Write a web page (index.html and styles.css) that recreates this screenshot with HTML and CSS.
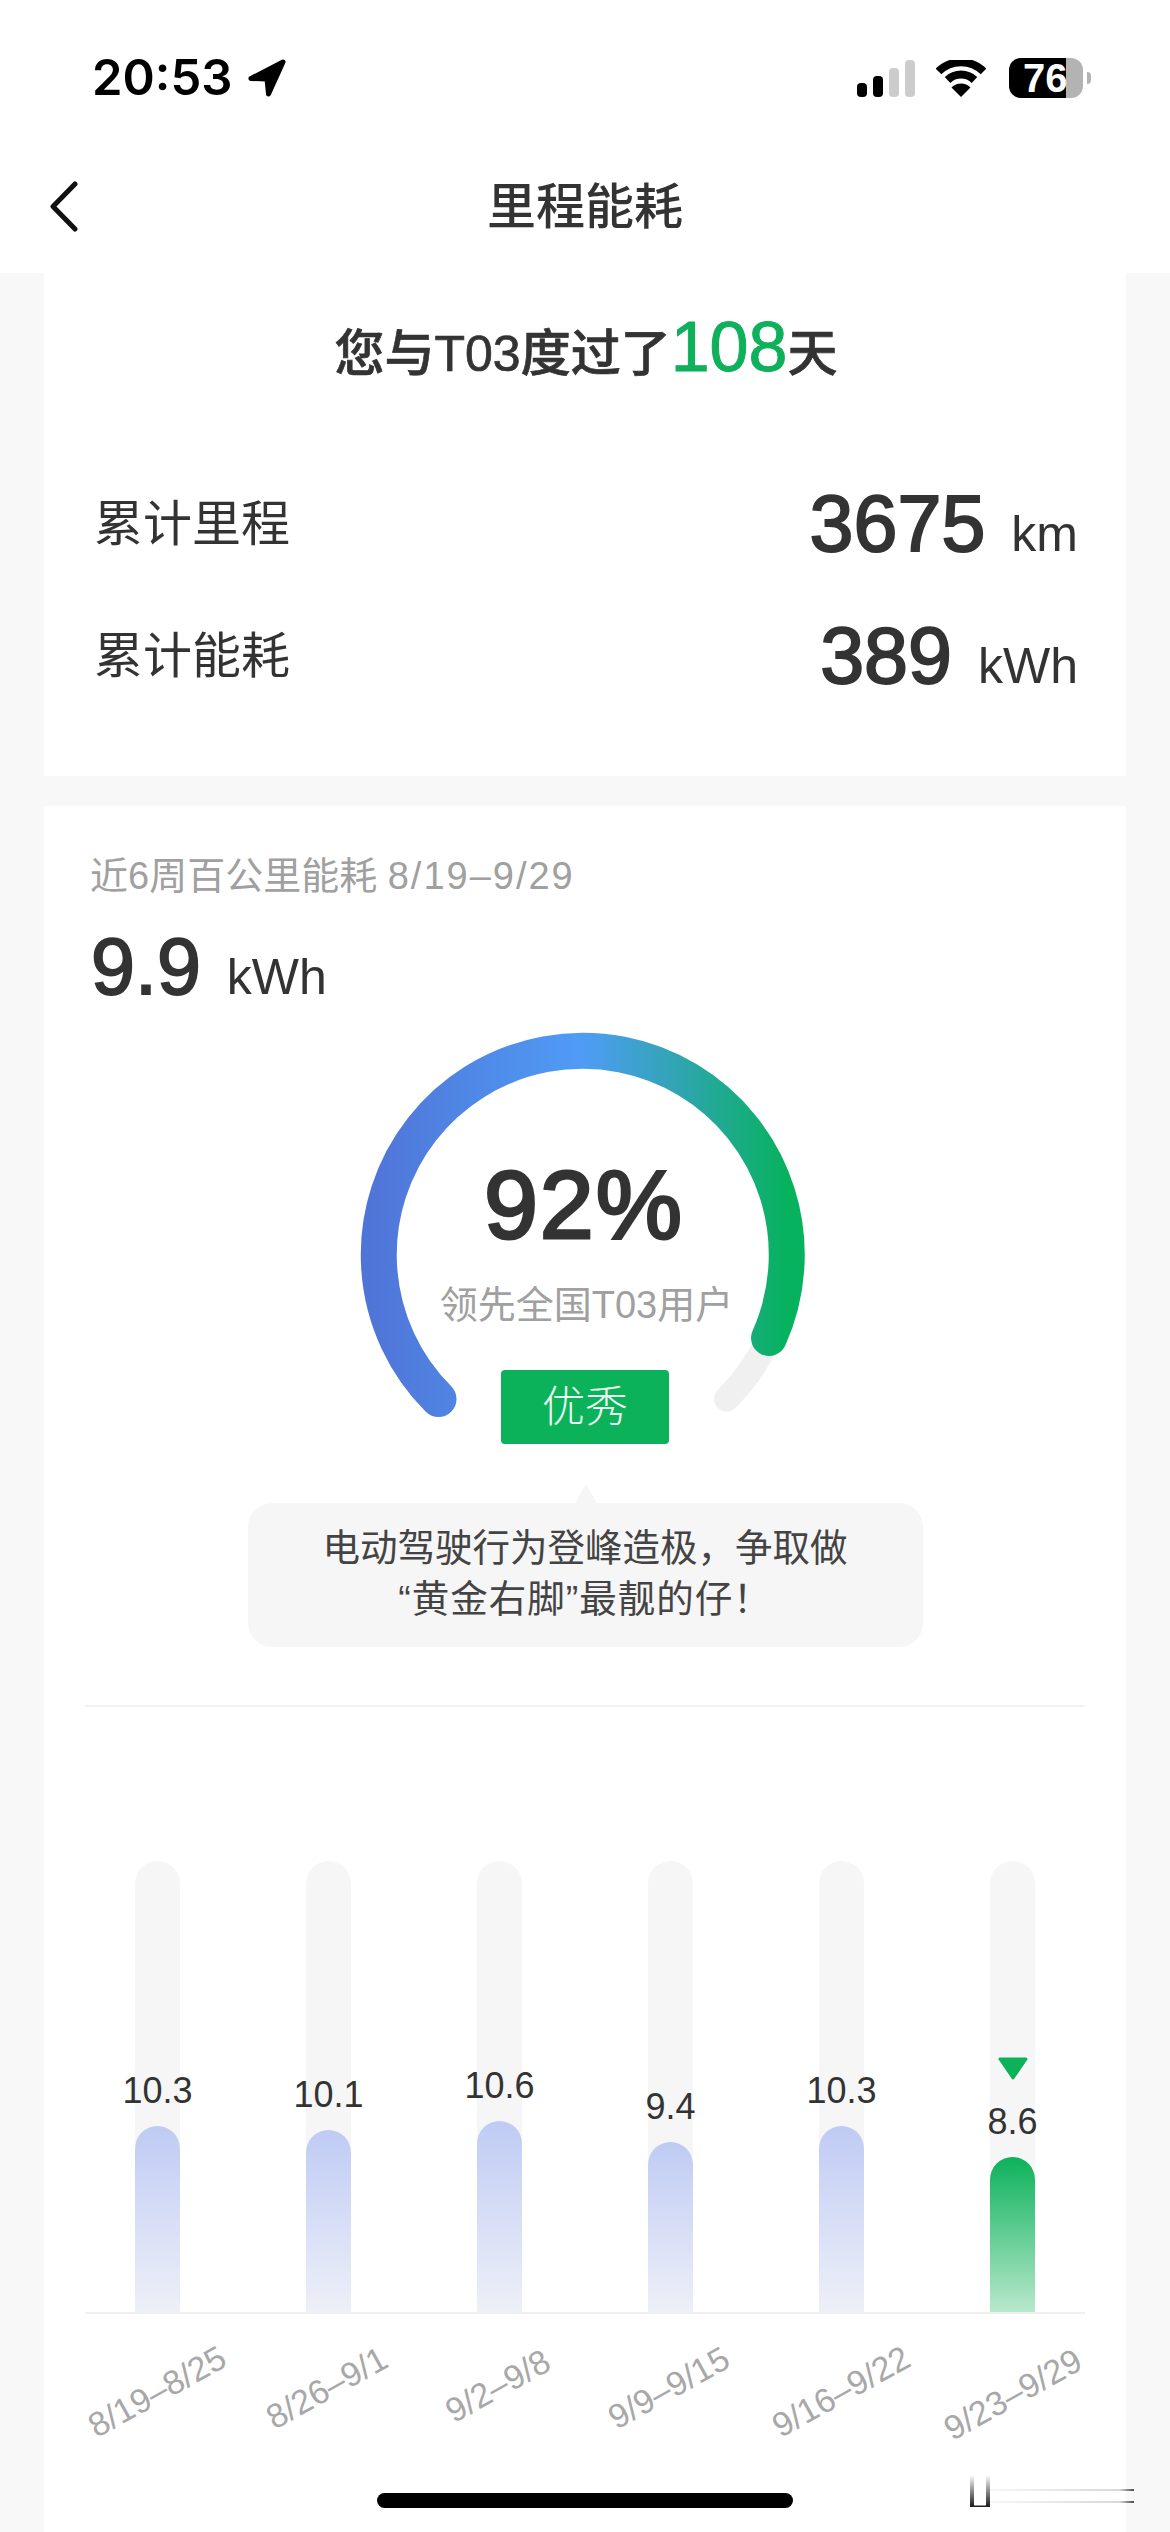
FILE: index.html
```html
<!DOCTYPE html>
<html lang="zh-CN">
<head>
<meta charset="utf-8">
<title>里程能耗</title>
<link rel="stylesheet" href="styles.css">
</head>
<body>
<div class="page">
  <header class="top">
    <div class="status">
      <div class="status-left">
        <span class="time">20:53</span>
        <svg class="loc" viewBox="0 0 40 38" width="40" height="38"><path d="M36 3 L4 19.5 L20 20 L21.5 35 Z" fill="#000" stroke="#000" stroke-width="5" stroke-linejoin="round"/></svg>
      </div>
      <div class="status-right">
        <svg class="signal" viewBox="0 0 58 37" width="58" height="37">
          <rect x="0" y="23" width="10" height="14" rx="4" fill="#000"/>
          <rect x="16" y="16" width="10" height="21" rx="4" fill="#000"/>
          <rect x="32" y="8" width="10" height="29" rx="4" fill="#ccc"/>
          <rect x="48" y="0" width="10" height="37" rx="4" fill="#ccc"/>
        </svg>
        <svg class="wifi" viewBox="0 0 50 37" width="50" height="37">
          <path d="M2.5 11.5 A32 32 0 0 1 47.5 11.5" fill="none" stroke="#000" stroke-width="8"/>
          <path d="M11.5 20 A19.5 19.5 0 0 1 38.5 20" fill="none" stroke="#000" stroke-width="8"/>
          <path d="M25 37 L15.5 27.5 A13.5 13.5 0 0 1 34.5 27.5 Z" fill="#000"/>
        </svg>
        <div class="battery">
          <div class="battery-body"><span class="battery-level">76</span></div>
          <span class="battery-nub"></span>
        </div>
      </div>
    </div>
    <nav class="nav">
      <svg class="back" viewBox="0 0 30 51" width="30" height="51"><path d="M26 3 L4 25.5 L26 48" fill="none" stroke="#111" stroke-width="5" stroke-linecap="round" stroke-linejoin="round"/></svg>
      <h1 class="nav-title">里程能耗</h1>
    </nav>
  </header>

  <main class="main">
    <section class="card card-summary">
      <p class="headline">您与T03度过了<span class="days">108</span>天</p>
      <div class="stat-row">
        <span class="stat-label">累计里程</span>
        <span class="stat-value"><b class="num">3675</b><span class="unit">km</span></span>
      </div>
      <div class="stat-row">
        <span class="stat-label">累计能耗</span>
        <span class="stat-value"><b class="num">389</b><span class="unit">kWh</span></span>
      </div>
    </section>

    <section class="card card-detail">
      <p class="period">近6周百公里能耗 <span class="period-range">8/19–9/29</span></p>
      <p class="average"><b class="num">9.9</b><span class="unit">kWh</span></p>

      <div class="gauge">
        <svg class="gauge-arc" viewBox="0 0 1000 414">
          <defs>
            <linearGradient id="arc" gradientUnits="userSpaceOnUse" x1="276" y1="0" x2="719" y2="0">
              <stop offset="0" stop-color="#5073d6"/>
              <stop offset="0.5" stop-color="#4f9cf6"/>
              <stop offset="0.72" stop-color="#2fa5b0"/>
              <stop offset="0.96" stop-color="#07b25e"/>
            </linearGradient>
          </defs>
          <path d="M684 307 A204 204 0 0 1 641.5 368" fill="none" stroke="#f0f0f0" stroke-width="25" stroke-linecap="round"/>
          <path d="M353.5 368 A204 204 0 1 1 684 307" fill="none" stroke="url(#arc)" stroke-width="36" stroke-linecap="round"/>
        </svg>
        <div class="gauge-percent num">92%</div>
        <div class="gauge-sub">领先全国T03用户</div>
        <div class="gauge-badge">优秀</div>
      </div>

      <div class="tip">电动驾驶行为登峰造极，争取做<br><span class="tip-second">“黄金右脚”最靓的仔！</span></div>

      <div class="chart">
        <div class="bars">
          <div class="col"><div class="track"><span class="val">10.3</span><div class="fill" style="height:186px"></div></div></div>
          <div class="col"><div class="track"><span class="val">10.1</span><div class="fill" style="height:182px"></div></div></div>
          <div class="col"><div class="track"><span class="val">10.6</span><div class="fill" style="height:191px"></div></div></div>
          <div class="col"><div class="track"><span class="val">9.4</span><div class="fill" style="height:170px"></div></div></div>
          <div class="col"><div class="track"><span class="val">10.3</span><div class="fill" style="height:186px"></div></div></div>
          <div class="col"><div class="track">
            <svg class="marker" viewBox="0 0 32 23" width="32" height="23"><path d="M3 2 H29 L16 21 Z" fill="#0cb25a" stroke="#0cb25a" stroke-width="3" stroke-linejoin="round"/></svg>
            <span class="val">8.6</span><div class="fill fill-current" style="height:155px"></div></div></div>
        </div>
        <div class="dates">
          <span class="date date-long">8/19–8/25</span>
          <span class="date date-mid">8/26–9/1</span>
          <span class="date date-short">9/2–9/8</span>
          <span class="date date-mid">9/9–9/15</span>
          <span class="date date-long">9/16–9/22</span>
          <span class="date date-last">9/23–9/29</span>
        </div>
      </div>
    </section>
  </main>

  <div class="home-bar"></div>
  <svg class="smudge" viewBox="0 0 180 40" width="180" height="40">
    <defs>
      <linearGradient id="sm" x1="0" y1="0" x2="0" y2="1">
        <stop offset="0" stop-color="#000" stop-opacity="0"/>
        <stop offset="1" stop-color="#000" stop-opacity="0.9"/>
      </linearGradient>
      <linearGradient id="sl" x1="0" y1="0" x2="1" y2="0">
        <stop offset="0" stop-color="#000" stop-opacity="0.03"/>
        <stop offset="0.9" stop-color="#000" stop-opacity="0.15"/>
        <stop offset="1" stop-color="#000" stop-opacity="0.7"/>
      </linearGradient>
    </defs>
    <rect x="0" y="2" width="4" height="32" fill="url(#sm)"/>
    <rect x="16" y="2" width="4" height="32" fill="url(#sm)"/>
    <rect x="1" y="32.5" width="18" height="1.5" fill="#222"/>
    <rect x="20" y="16" width="144" height="2" fill="url(#sl)"/>
    <rect x="20" y="28" width="144" height="2" fill="url(#sl)"/>
  </svg>
</div>
</body>
</html>
```

FILE: styles.css
```css
* { box-sizing: border-box; }
html, body { margin: 0; padding: 0; }
body {
  font-family: "Liberation Sans", "Noto Sans CJK SC", sans-serif;
  color: #333;
  background: #f8f8f8;
}
p, h1 { margin: 0; }

.page {
  position: relative;
  width: 1170px;
  height: 2532px;
  overflow: hidden;
  background: #f8f8f8;
  display: flex;
  flex-direction: column;
}

/* header */
.top { background: #fff; height: 273px; flex: none; }
.status {
  height: 140px;
  padding: 16px 79px 0 92px;
  display: flex;
  align-items: center;
  justify-content: space-between;
}
.status-left { display: flex; align-items: center; gap: 15px; }
.time {
  font-family: Inter, "Liberation Sans", sans-serif;
  font-size: 49px;
  font-weight: 600;
  line-height: 50px;
  color: #000;
}
.status-right { display: flex; align-items: center; gap: 23px; }
.signal, .wifi { display: block; }
.wifi { margin-left: -2px; }
.battery { display: flex; align-items: center; gap: 4px; }
.battery-body {
  width: 74px;
  height: 40px;
  border-radius: 12px;
  background: linear-gradient(to right, #000 0, #000 57px, #b3b3b3 57px);
  padding-left: 14px;
}
.battery-level {
  display: block;
  font-size: 40px;
  font-weight: 700;
  line-height: 40px;
  color: #fff;
}
.battery-nub {
  width: 4px;
  height: 12px;
  border-radius: 0 6px 6px 0;
  background: #b3b3b3;
}
.nav {
  height: 133px;
  position: relative;
  display: flex;
  align-items: center;
  justify-content: center;
}
.back { position: absolute; left: 49px; top: 41px; }
.nav-title {
  font-size: 49px;
  line-height: 60px;
  font-weight: 500;
  color: #333;
}

/* cards */
.main {
  flex: 1;
  padding: 0 44px;
  display: flex;
  flex-direction: column;
  gap: 30px;
}
.card { background: #fff; }
.card-summary { padding: 34px 48px 54px 50px; flex: none; }
.headline {
  font-size: 50px;
  line-height: 80px;
  font-weight: 500;
  text-align: center;
  color: #333;
  -webkit-text-stroke: 0.7px #333;
  margin-bottom: 64px;
  white-space: nowrap;
}
.days { font-size: 70px; font-weight: 400; color: #0fb05c; -webkit-text-stroke: 1px #0fb05c; }
.stat-row {
  height: 132px;
  display: flex;
  align-items: center;
  justify-content: space-between;
}
.stat-label { font-size: 49px; line-height: 60px; color: #333; }
.stat-value { display: flex; align-items: baseline; gap: 26px; }
.num {
  font-weight: 400;
  -webkit-text-stroke: 2px #333;
  font-size: 79px;
  line-height: 80px;
  color: #333;
}
.unit { font-size: 50px; line-height: 60px; color: #333; }

.card-detail { flex: 1; padding: 45px 41px 0; }
.period {
  font-size: 38px;
  line-height: 50px;
  color: #a0a0a0;
  margin-left: 5px;
  white-space: nowrap;
}
.period-range { letter-spacing: 2px; }
.average {
  display: flex;
  align-items: baseline;
  gap: 26px;
  margin: 26px 0 0 6px;
}

/* gauge */
.gauge {
  position: relative;
  height: 414px;
  margin-top: 24px;
  padding-top: 119px;
  display: flex;
  flex-direction: column;
  align-items: center;
}
.gauge-arc { position: absolute; inset: 0; width: 100%; height: 100%; }
.gauge-percent {
  position: relative;
  font-size: 97px;
  line-height: 110px;
  letter-spacing: 2px;
  margin-left: -2px;
  -webkit-text-stroke: 3px #333;
}
.gauge-sub {
  position: relative;
  margin-top: 20px;
  margin-left: 3px;
  font-size: 38px;
  line-height: 50px;
  color: #a0a0a0;
  white-space: nowrap;
}
.gauge-badge {
  position: relative;
  margin-top: 40px;
  width: 168px;
  height: 74px;
  border-radius: 4px;
  background: #0cb25a;
  color: #eafff2;
  font-size: 43px;
  line-height: 74px;
  font-weight: 300;
  text-align: center;
}

/* tip */
.tip {
  position: relative;
  width: 675px;
  height: 144px;
  margin: 58px auto 0;
  padding-top: 20px;
  border-radius: 24px;
  background: #f6f6f6;
  color: #444;
  font-size: 37.5px;
  line-height: 51px;
  text-align: center;
}
.tip-second { letter-spacing: 1px; }
.tip::before {
  content: "";
  position: absolute;
  left: 327px;
  top: -19px;
  border-left: 11px solid transparent;
  border-right: 11px solid transparent;
  border-bottom: 19px solid #f6f6f6;
}

/* chart */
.chart { position: relative; margin-top: 58px; border-top: 2px solid #f2f2f2; padding-top: 154px; }
.bars {
  display: grid;
  grid-template-columns: repeat(6, 171px);
  margin: 0 -13px;
  position: relative;
}
.bars::after {
  content: "";
  position: absolute;
  left: 13px;
  right: 13px;
  bottom: -2px;
  height: 2px;
  background: #f0f0f0;
}
.col { display: flex; justify-content: center; }
.track {
  width: 45px;
  height: 451px;
  border-radius: 23px 23px 0 0;
  background: #f6f6f6;
  display: flex;
  flex-direction: column;
  align-items: center;
  justify-content: flex-end;
}
.val {
  font-size: 36px;
  line-height: 36px;
  color: #333;
  margin-bottom: 17px;
  white-space: nowrap;
}
.fill {
  width: 100%;
  flex: none;
  border-radius: 23px 23px 0 0;
  background: linear-gradient(to bottom, #bfcbf4, #eef0f8);
}
.fill-current { background: linear-gradient(to bottom, #0cb25a, #b8e8cd); }
.marker { flex: none; margin-bottom: 24px; }

.dates {
  display: grid;
  grid-template-columns: repeat(6, 171px);
  margin: 0 -13px;
}
.date {
  justify-self: center;
  font-size: 34px;
  line-height: 40px;
  color: #a8a8a8;
  white-space: nowrap;
  transform: rotate(-29deg);
}
.date-long { margin-top: 59px; }
.date-mid { margin-top: 55px; }
.date-short { margin-top: 53px; }
.date-last { margin-top: 62px; }

/* overlays */
.home-bar {
  position: absolute;
  left: 377px;
  top: 2493px;
  width: 416px;
  height: 15px;
  border-radius: 8px;
  background: #000;
}
.smudge { position: absolute; left: 970px; top: 2473px; }
```
